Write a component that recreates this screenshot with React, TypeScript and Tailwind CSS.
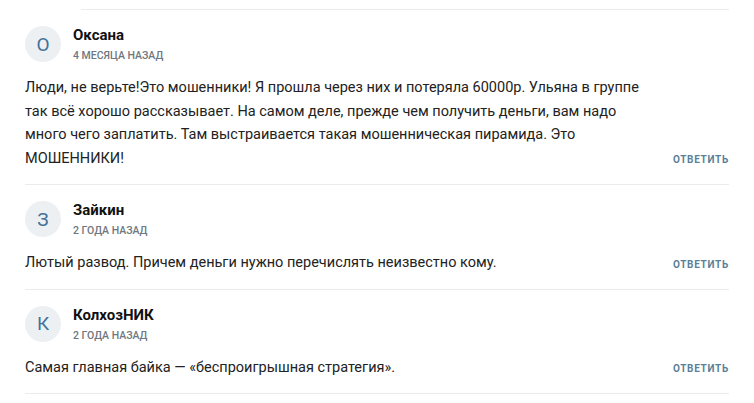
import React from 'react';

type Comment = {
  id: number;
  initial: string;
  name: string;
  date: string;
  text: string;
};

const comments: Comment[] = [
  {
    id: 1,
    initial: 'О',
    name: 'Оксана',
    date: '4 месяца назад',
    text: 'Люди, не верьте!Это мошенники! Я прошла через них и потеряла 60000р. Ульяна в группе так всё хорошо рассказывает. На самом деле, прежде чем получить деньги, вам надо много чего заплатить. Там выстраивается такая мошенническая пирамида. Это МОШЕННИКИ!',
  },
  {
    id: 2,
    initial: 'З',
    name: 'Зайкин',
    date: '2 года назад',
    text: 'Лютый развод. Причем деньги нужно перечислять неизвестно кому.',
  },
  {
    id: 3,
    initial: 'К',
    name: 'КолхозНИК',
    date: '2 года назад',
    text: 'Самая главная байка — «беспроигрышная стратегия».',
  },
];

const CommentItem: React.FC<{ c: Comment }> = ({ c }) => (
  <div className="border-b border-[#ebebeb] pt-[16px] pb-[14px]">
    {/* шапка: аватар + имя */}
    <div className="flex items-start gap-3">
      <div className="w-9 h-9 rounded-full bg-[#edf0f3] flex items-center justify-center text-[19px] text-[#42729a] leading-none shrink-0">
        {c.initial}
      </div>
      <div className="flex flex-col">
        <span className="text-[15px] leading-[19px] font-bold text-[#111]">{c.name}</span>
        <span className="mt-[3px] text-[10.5px] leading-4 font-medium uppercase text-[#6f7780]">{c.date}</span>
      </div>
    </div>
    <div className="mt-[12px] flex items-end justify-between">
      <p className="w-[628px] text-[14.5px] leading-[23.5px] text-[#222]">{c.text}</p>
      <button
        type="button"
        className="shrink-0 mb-[2px] text-[10px] leading-4 font-bold uppercase tracking-[0.7px] text-[#5a7f98]"
      >
        Ответить
      </button>
    </div>
  </div>
);

export default function App() {
  return (
    <div className="w-[754px] h-[403px] overflow-hidden bg-white font-['Roboto',_'Liberation_Sans',_sans-serif]">
      <div className="pl-[25px] pr-[25px] pt-[9px]">
        <div className="ml-[56px] border-t border-[#ebebeb]" />
        {comments.map((c) => (
          <CommentItem key={c.id} c={c} />
        ))}
      </div>
    </div>
  );
}
